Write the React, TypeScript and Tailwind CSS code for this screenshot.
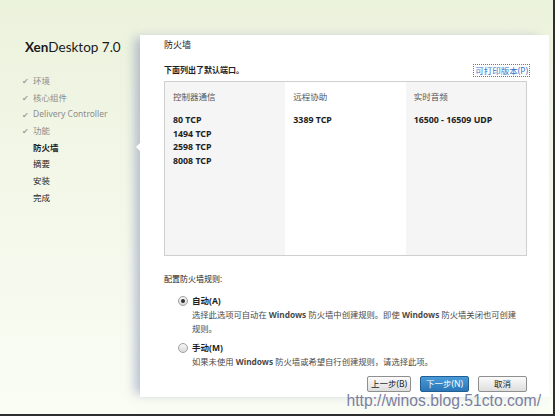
import React from "react";

const cjk = { fontFamily: '"Noto Sans", "Noto Sans CJK SC", sans-serif' };

const steps = [
  { label: "环境", done: true },
  { label: "核心组件", done: true },
  { label: "Delivery Controller", done: true },
  { label: "功能", done: true },
  { label: "防火墙", current: true },
  { label: "摘要" },
  { label: "安装" },
  { label: "完成" },
];

const columns = [
  { title: "控制器通信", ports: ["80 TCP", "1494 TCP", "2598 TCP", "8008 TCP"], shade: true },
  { title: "远程协助", ports: ["3389 TCP"], shade: false },
  { title: "实时音频", ports: ["16500 - 16509 UDP"], shade: true },
];

function Radio({ checked }: { checked?: boolean }) {
  return (
    <span className="mt-[2px] flex h-[10px] w-[10px] shrink-0 items-center justify-center rounded-full border border-[#a0a0a0] bg-gradient-to-b from-[#f6f6f6] to-[#dadada]">
      {checked && <span className="h-[4px] w-[4px] rounded-full bg-[#333]" />}
    </span>
  );
}

export default function App() {
  return (
    <div className="h-[419px] w-[558px] overflow-hidden bg-white" style={cjk}>
      <div className="relative flex h-[416px] w-[555px] border-b-2 border-r-2 border-[#2e2e2e] bg-gradient-to-b from-[#ebf2dc] via-[#f4f8ea] to-[#fafdf4]">
        {/* Sidebar */}
        <div className="w-[140px] shrink-0 pl-[25px] pt-[37px]">
          <div
            className="whitespace-nowrap text-[13.5px] leading-[20px] text-[#1a1a1a]"
            style={{ fontFamily: 'Lato, "Open Sans", sans-serif' }}
          >
            <span className="font-bold">Xen</span>Desktop 7.0
          </div>
          <ul className="mt-[16px] -ml-[3px] text-[8.5px]">
            {steps.map((s) => (
              <li
                key={s.label}
                className={
                  "flex h-[16.7px] items-center whitespace-nowrap " +
                  (s.done ? "text-[#8c8c8c]" : "text-[#1e1e1e]") +
                  (s.current ? " font-bold" : "")
                }
              >
                <span className="w-[11px] text-[8px] text-[#a5a5a5]">{s.done ? "✔" : ""}</span>
                {s.label}
              </li>
            ))}
          </ul>
        </div>

        {/* Main panel */}
        <div className="relative mb-[17px] mr-[4px] mt-[35px] flex min-w-0 flex-1 flex-col bg-white pl-[24px] pr-[22px] shadow-[-8px_0_10px_-3px_rgba(130,140,180,0.55)]">
          <span className="absolute left-[-4px] top-[108px] h-0 w-0 border-y-[4px] border-r-[4px] border-y-transparent border-r-white" />
          <div className="pt-[3px] text-[9px] leading-[14px] text-[#222]">防火墙</div>

          <div className="mt-[11px] flex items-end justify-between leading-[14px]">
            <span className="text-[8px] font-bold text-[#1e1e1e]">下面列出了默认端口。</span>
            <span className="-mr-[3px] border border-dotted border-[#3b7fd6] px-[1px] text-[8.5px] leading-[11px] text-[#2f74d0]">
              可打印版本(P)
            </span>
          </div>

          <div className="mt-[4px] grid h-[175px] shrink-0 grid-cols-3 border border-[#cfcfcf]">
            {columns.map((c) => (
              <div key={c.title} className={(c.shade ? "bg-[#f5f5f5] " : "bg-white ") + "pl-[8px] pt-[8px]"}>
                <div className="text-[8.5px] leading-[14px] text-[#555]">{c.title}</div>
                <div className="mt-[10px] text-[8.8px] font-bold leading-[13.7px] text-[#222]">
                  {c.ports.map((p) => (
                    <div key={p} className="whitespace-pre">{p}</div>
                  ))}
                </div>
              </div>
            ))}
          </div>

          <div className="mt-[16px] text-[8px] leading-[14px] text-[#222]">配置防火墙规则:</div>

          <div className="mt-[8px] flex gap-[4px] pl-[14px] leading-[14px]">
            <Radio checked />
            <div>
              <div className="text-[8.5px] font-bold text-[#1e1e1e]">自动(A)</div>
              <div className="whitespace-nowrap text-[8.3px] text-[#4a4a4a]">
                选择此选项可自动在 <b>Windows</b> 防火墙中创建规则。即使 <b>Windows</b> 防火墙关闭也可创建
                <br />
                规则。
              </div>
            </div>
          </div>

          <div className="mt-[5px] flex gap-[4px] pl-[14px] leading-[14px]">
            <Radio />
            <div>
              <div className="text-[8.5px] font-bold text-[#1e1e1e]">手动(M)</div>
              <div className="whitespace-nowrap text-[8.3px] text-[#4a4a4a]">
                如果未使用 <b>Windows</b> 防火墙或希望自行创建规则，请选择此项。
              </div>
            </div>
          </div>

          <div className="mt-auto mb-[5px] flex justify-end gap-[9px] text-[8.5px]">
            <button className="h-[16px] w-[44px] rounded-[2px] border border-[#8f8f8f] bg-gradient-to-b from-[#fbfbfb] to-[#dedede] text-[#222]">
              上一步(B)
            </button>
            <button className="h-[16px] w-[49px] rounded-[2px] border border-[#1f5f96] bg-gradient-to-b from-[#4a9ad8] to-[#2a76b6] text-white">
              下一步(N)
            </button>
            <button className="h-[16px] w-[49px] rounded-[2px] border border-[#8f8f8f] bg-gradient-to-b from-[#fbfbfb] to-[#dedede] text-[#222]">
              取消
            </button>
          </div>
        </div>

        <span
          className="absolute bottom-[3px] right-[12px] text-[15.7px] leading-[20px] text-[#7c7fa3]"
          style={{ fontFamily: '"Liberation Sans", Arial, sans-serif' }}
        >
          http://winos.blog.51cto.com/
        </span>
      </div>
    </div>
  );
}
